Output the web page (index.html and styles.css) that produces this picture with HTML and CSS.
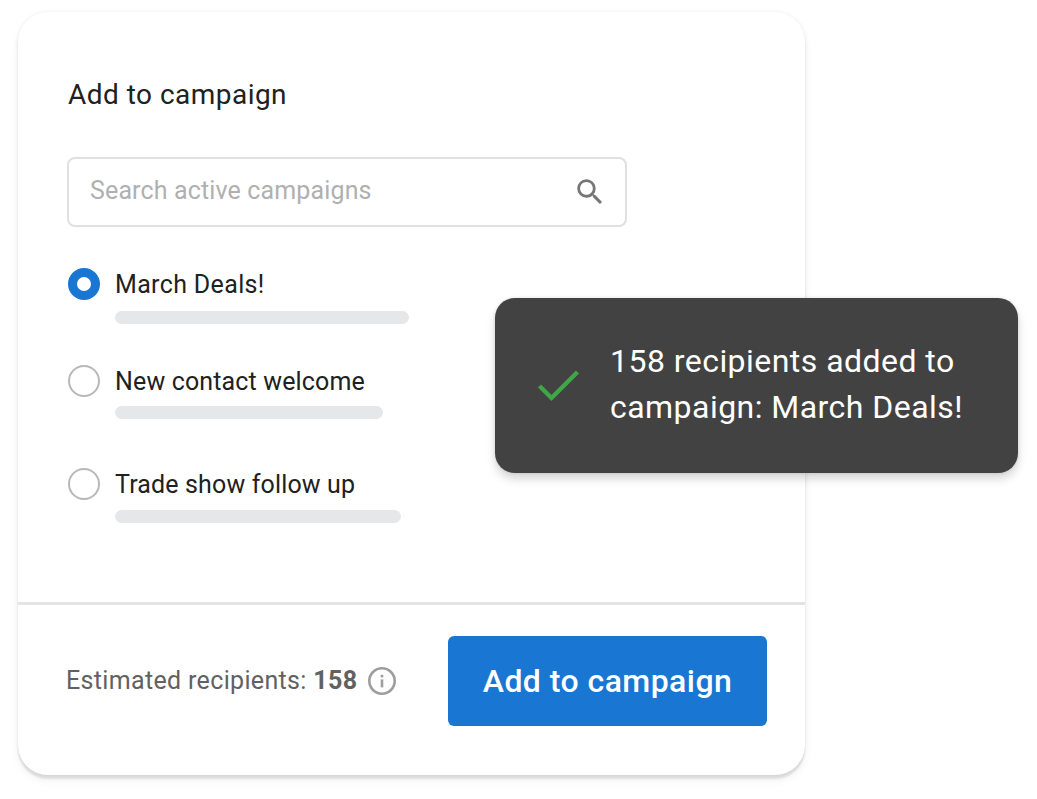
FILE: index.html
```html
<!DOCTYPE html>
<html lang="en">
<head>
<meta charset="utf-8">
<title>Add to campaign</title>
<link rel="stylesheet" href="styles.css">
</head>
<body>
<div class="stage">
  <section class="card">
    <div class="card-body">
      <h1 class="title">Add to campaign</h1>
      <div class="search">
        <span class="search-text">Search active campaigns</span>
        <svg class="search-icon" width="34" height="34" viewBox="0 0 24 24"><path fill="#757575" d="M15.5 14h-.79l-.28-.27A6.47 6.47 0 0 0 16 9.5 6.5 6.5 0 1 0 9.5 16c1.61 0 3.09-.59 4.23-1.57l.27.28v.79l5 4.99L20.49 19l-4.99-5zm-6 0C7.01 14 5 11.99 5 9.5S7.01 5 9.5 5 14 7.01 14 9.5 11.99 14 9.5 14z"/></svg>
      </div>
      <ul class="options">
        <li class="option option-first">
          <span class="radio radio-on"></span>
          <div class="option-main"><div class="option-label">March Deals!</div><div class="bar bar-1"></div></div>
        </li>
        <li class="option option-second">
          <span class="radio"></span>
          <div class="option-main"><div class="option-label">New contact welcome</div><div class="bar bar-2"></div></div>
        </li>
        <li class="option option-third">
          <span class="radio"></span>
          <div class="option-main"><div class="option-label">Trade show follow up</div><div class="bar bar-3"></div></div>
        </li>
      </ul>
    </div>
    <footer class="card-foot">
      <div class="estimate">
        <span>Estimated recipients: <b>158</b></span>
        <svg class="info" width="30" height="30" viewBox="0 0 30 30"><circle cx="15" cy="15" r="12.7" fill="none" stroke="#9e9e9e" stroke-width="2.6"/><rect x="13.7" y="13.4" width="2.6" height="8" fill="#9e9e9e"/><rect x="13.7" y="8.8" width="2.6" height="2.6" fill="#9e9e9e"/></svg>
      </div>
      <button class="cta">Add to campaign</button>
    </footer>
  </section>
  <aside class="toast">
    <svg class="check" width="44" height="34" viewBox="0 0 44 34"><path d="M2.5 17 L14.5 29 L40.5 3" fill="none" stroke="#3fa648" stroke-width="4.4"/></svg>
    <p class="toast-text">158 recipients added to<br>campaign: March Deals!</p>
  </aside>
</div>
</body>
</html>
```
FILE: styles.css
```css
* { box-sizing: border-box; }
html, body { margin: 0; padding: 0; background: #fff; }
body { font-family: Roboto, "Liberation Sans", sans-serif; color: #212121; }
.stage { position: relative; width: 1037px; height: 799px; padding: 12px 0 0 18px; overflow: hidden; }
.card {
  width: 787px; height: 763px; background: #fff; border-radius: 30px;
  display: flex; flex-direction: column;
  box-shadow: 0 4px 2px rgba(0,0,0,.09), 0 6px 10px rgba(0,0,0,.05), 0 0 4px rgba(0,0,0,.07);
}
.card-body { flex: 1; padding: 65px 0 0 49px; border-bottom: 3px solid #e4e4e4; }
.title { margin: 0 0 44px 1px; font-size: 28px; line-height: 36px; font-weight: 400; letter-spacing: .47px; }
.search {
  width: 560px; height: 70px; border: 2px solid #e0e0e0; border-radius: 8px;
  display: flex; align-items: center; justify-content: space-between;
  padding: 0 18px 0 21px;
}
.search-text { font-size: 25px; letter-spacing: .14px; color: #b0b0b0; margin-bottom: 3px; }
.search-icon { display: block; }
.options { list-style: none; margin: 0; padding: 0 0 0 1px; }
.option { display: flex; gap: 15px; }
.option-first { margin-top: 40px; }
.option-second { margin-top: 40px; }
.option-third { margin-top: 48px; }
.radio { width: 32px; height: 32px; border-radius: 50%; border: 2.5px solid #b8b8b8; flex: none; margin-top: 1px; }
.radio-on { border: 9px solid #1976d2; }
.option-label { font-size: 25px; line-height: 34px; letter-spacing: .15px; margin-top: 1px; }
.option-first .option-label { letter-spacing: .35px; }
.bar { height: 13px; border-radius: 7px; background: #e6e7e8; margin-top: 9px; }
.bar-1 { width: 294px; }
.bar-2 { width: 268px; margin-top: 7px; }
.bar-3 { width: 286px; margin-top: 8px; }
.card-foot { height: 170px; flex: none; display: flex; align-items: center; justify-content: space-between; padding: 0 38px 19px 48px; }
.estimate { display: flex; align-items: center; gap: 10px; font-size: 25px; letter-spacing: .34px; color: #616161; }
.estimate b { font-weight: 700; }
.info { display: block; }
.cta {
  width: 319px; height: 90px; border: 0; border-radius: 6px; background: #1976d2; color: #fff;
  font-family: inherit; font-size: 32px; letter-spacing: .45px; font-weight: 500; padding: 0;
}
.toast {
  position: absolute; left: 495px; top: 298px; width: 523px; height: 175px;
  background: #424242; border-radius: 20px; color: #fff;
  display: flex; align-items: center; padding: 0 0 0 42px; gap: 29px;
  box-shadow: 0 6px 10px rgba(0,0,0,.16), 0 0 3px rgba(0,0,0,.12);
}
.check { display: block; flex: none; }
.toast-text { margin: 0 0 4px; font-size: 32px; line-height: 46px; font-weight: 400; letter-spacing: .46px; }
```
